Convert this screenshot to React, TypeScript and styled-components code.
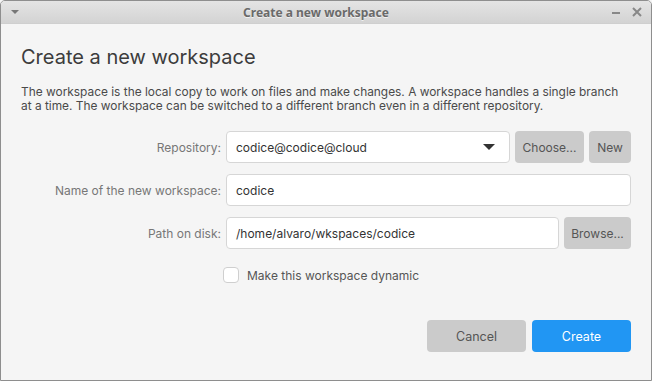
import React, { useState } from "react";
import styled, { createGlobalStyle } from "styled-components";

const Global = createGlobalStyle`
  html, body {
    margin: 0;
    padding: 0;
    background: #f5f5f5;
  }
  * { box-sizing: border-box; }
`;

const Window = styled.div`
  width: 652px;
  height: 381px;
  display: flex;
  flex-direction: column;
  border: 1px solid #8e8e8e;
  border-radius: 5px 5px 0 0;
  background: #f5f5f5;
  overflow: hidden;
  font-family: Inter, "Noto Sans", sans-serif;
`;

const TitleBar = styled.div`
  height: 23px;
  flex: none;
  display: flex;
  align-items: center;
  padding: 0 8px 0 8px;
  background: linear-gradient(#e4e4e4, #d3d3d3);
  border-bottom: 1px solid #cfcfcf;
`;

const TitleText = styled.div`
  flex: 1;
  text-align: center;
  font-family: "Noto Sans", sans-serif;
  font-weight: 700;
  font-size: 12px;
  color: #6a6a6a;
  text-shadow: 0 1px 0 #f0f0f0;
`;

const TitleIcons = styled.div`
  display: flex;
  align-items: center;
  gap: 10px;
`;

const Body = styled.div`
  flex: 1;
  display: flex;
  flex-direction: column;
  padding: 19px 20px 0 20px;
`;

const Heading = styled.h1`
  margin: 0;
  font-weight: 400;
  font-size: 20px;
  color: #3c3c3c;
  line-height: 28px;
`;

const Description = styled.p`
  margin: 14px 0 0 0;
  font-size: 11.9px;
  line-height: 14px;
  color: #4a4a4a;
`;

const Form = styled.div`
  display: grid;
  grid-template-columns: 200px 1fr;
  column-gap: 5px;
  row-gap: 11px;
  margin-top: 18px;
  align-items: center;
`;

const Label = styled.div`
  text-align: right;
  font-size: 12px;
  color: #777;
`;

const Line = styled.div`
  display: flex;
  gap: 5px;
`;

const Field = styled.div`
  flex: 1;
  height: 32px;
  display: flex;
  align-items: center;
  padding: 0 9px;
  background: #fff;
  border: 1px solid #d6d6d6;
  border-radius: 4px;
  font-size: 12px;
  color: #333;
`;

const Caret = styled.span`
  margin-left: auto;
  width: 0;
  height: 0;
  border-left: 6px solid transparent;
  border-right: 6px solid transparent;
  border-top: 6px solid #333;
  margin-right: 5px;
`;

const GrayButton = styled.button<{ $w: number }>`
  width: ${(p) => p.$w}px;
  height: 32px;
  border: none;
  border-radius: 4px;
  background: #cbcbcb;
  color: #555;
  font-family: Inter, "Noto Sans", sans-serif;
  font-size: 12px;
  padding: 0;
`;

const CheckRow = styled.label`
  grid-column: 2;
  display: flex;
  align-items: center;
  gap: 8px;
  margin-top: 7px;
  margin-left: -3px;
  font-size: 12px;
  color: #555;
`;

const Box = styled.span`
  width: 16px;
  height: 16px;
  border: 1px solid #cfcfcf;
  border-radius: 4px;
  background: #fff;
`;

const Footer = styled.div`
  margin-top: auto;
  margin-bottom: 28px;
  display: flex;
  justify-content: flex-end;
  gap: 6px;
`;

const DialogButton = styled.button<{ $primary?: boolean }>`
  width: 99px;
  height: 32px;
  border: none;
  border-radius: 4px;
  background: ${(p) => (p.$primary ? "#2196f3" : "#cbcbcb")};
  color: ${(p) => (p.$primary ? "#fff" : "#555")};
  font-family: Inter, "Noto Sans", sans-serif;
  font-size: 12.5px;
`;

export default function App() {
  const [dynamic, setDynamic] = useState(false);
  return (
    <>
      <Global />
      <Window>
        <TitleBar>
          <svg width="12" height="12" viewBox="0 0 12 12">
            <path d="M2 4h8l-4 4z" fill="#777" />
          </svg>
          <TitleText>Create a new workspace</TitleText>
          <TitleIcons>
            <svg width="10" height="12" viewBox="0 0 10 12">
              <rect x="1" y="6" width="8" height="2" fill="#888" />
            </svg>
            <svg width="12" height="12" viewBox="0 0 12 12">
              <path d="M2 2l8 8M10 2l-8 8" stroke="#888" strokeWidth="2" />
            </svg>
          </TitleIcons>
        </TitleBar>
        <Body>
          <Heading>Create a new workspace</Heading>
          <Description>
            The workspace is the local copy to work on files and make changes. A workspace handles a single branch
            at a time. The workspace can be switched to a different branch even in a different repository.
          </Description>
          <Form>
            <Label>Repository:</Label>
            <Line>
              <Field>
                codice@codice@cloud
                <Caret />
              </Field>
              <GrayButton $w={69}>Choose...</GrayButton>
              <GrayButton $w={42}>New</GrayButton>
            </Line>
            <Label>Name of the new workspace:</Label>
            <Line>
              <Field>codice</Field>
            </Line>
            <Label>Path on disk:</Label>
            <Line>
              <Field>/home/alvaro/wkspaces/codice</Field>
              <GrayButton $w={67}>Browse...</GrayButton>
            </Line>
            <CheckRow onClick={() => setDynamic(!dynamic)}>
              <Box />
              Make this workspace dynamic
            </CheckRow>
          </Form>
          <Footer>
            <DialogButton>Cancel</DialogButton>
            <DialogButton $primary>Create</DialogButton>
          </Footer>
        </Body>
      </Window>
    </>
  );
}
